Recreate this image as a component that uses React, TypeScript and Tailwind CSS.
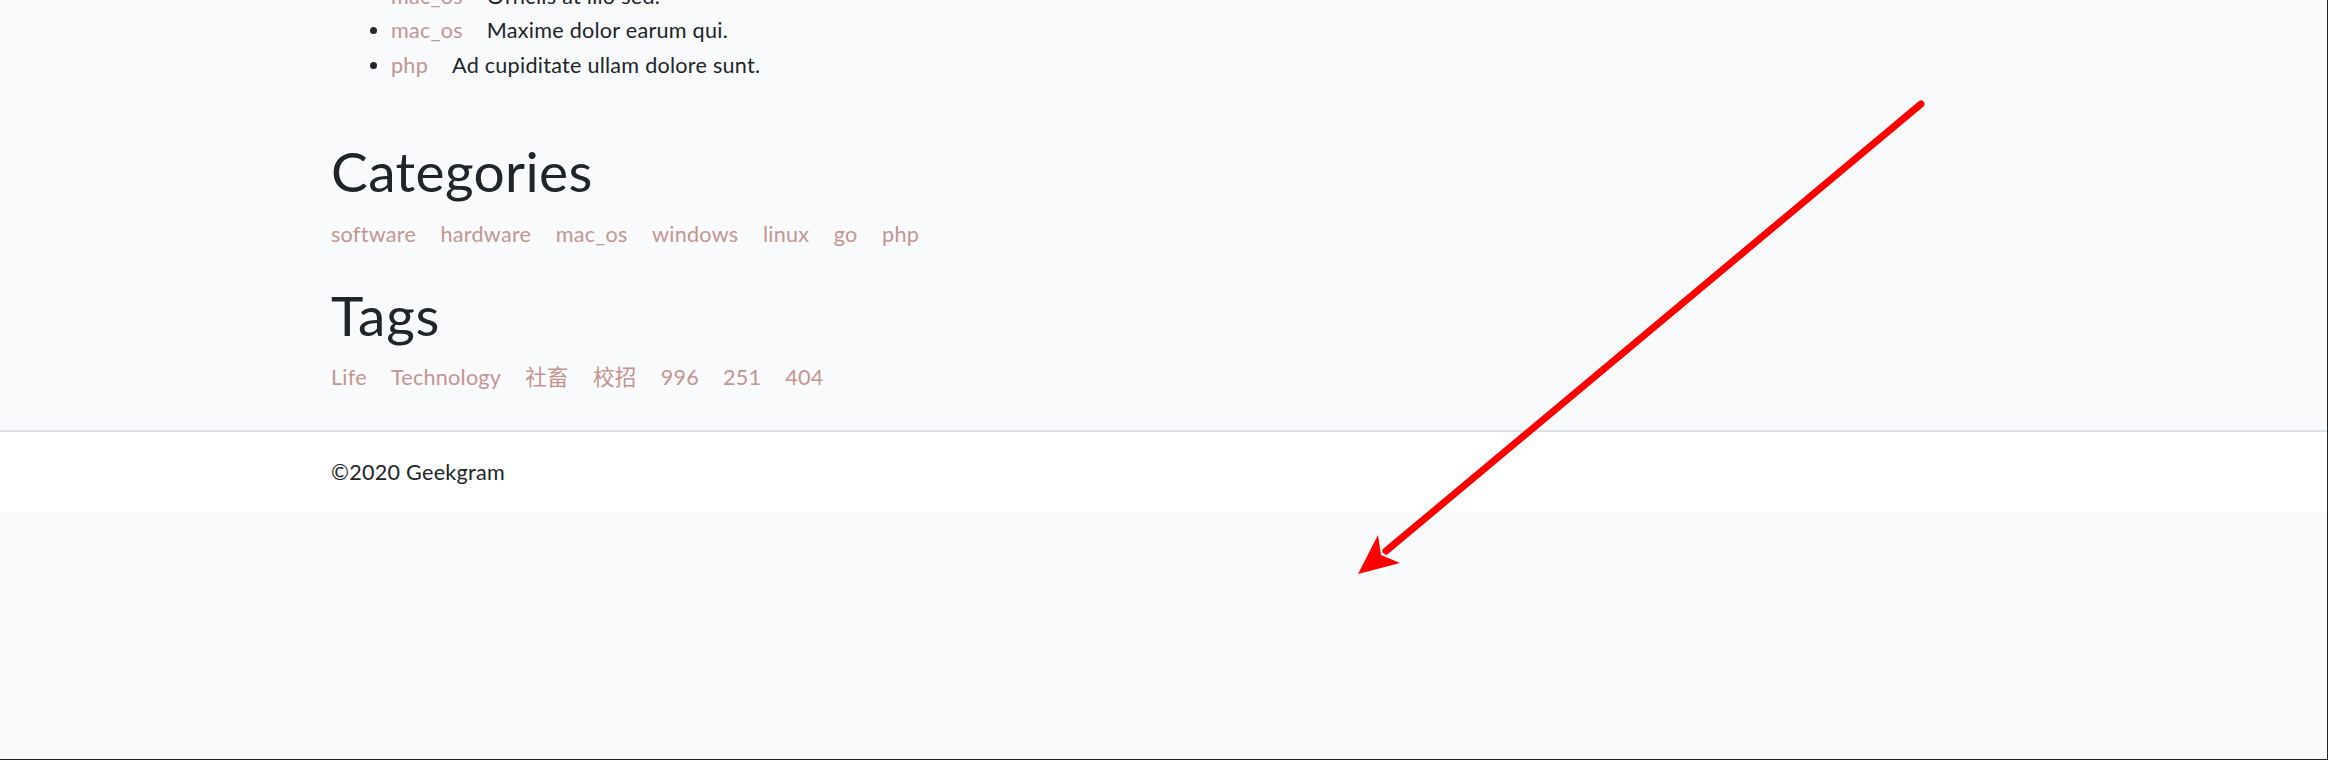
import React from "react";

const categories = ["software", "hardware", "mac_os", "windows", "linux", "go", "php"];
const tags = ["Life", "Technology", "社畜", "校招", "996", "251", "404"];
const posts = [
  { cat: "mac_os", title: "Officiis at illo sed." },
  { cat: "mac_os", title: "Maxime dolor earum qui." },
  { cat: "php", title: "Ad cupiditate ullam dolore sunt." },
];

function Arrow() {
  return (
    <svg
      className="pointer-events-none absolute left-0 top-0"
      width="2328"
      height="760"
      viewBox="0 0 2328 760"
    >
      <line x1="1921" y1="104" x2="1386" y2="551" stroke="#ff0000" strokeWidth="7" strokeLinecap="round" />
      <polygon points="1358,574 1378,535 1381,555 1400,563" fill="#ff0000" />
    </svg>
  );
}

export default function App() {
  return (
    <div className="relative h-[760px] w-full overflow-hidden border-r border-b border-[#222222] bg-[#f8fafc] font-['Lato','Noto_Sans_CJK_SC',sans-serif] text-[21.6px] leading-[1.6] tracking-[0.25px] text-[#212529]">
      <main className="pl-[331px]">
        <ul className="mt-[-21.5px] list-disc pl-[60px]">
          {posts.map((p, i) => (
            <li key={i}>
              <a className="mr-[24px] text-[#c39590]">{p.cat}</a>
              <span>{p.title}</span>
            </li>
          ))}
        </ul>
        <h1 className="mt-[56px] text-[55px] leading-[1.2] font-normal tracking-[0.4px]">Categories</h1>
        <div className="mt-[12.5px] flex flex-wrap gap-x-[24.5px]">
          {categories.map((c) => (
            <a key={c} className="text-[#c39590]">{c}</a>
          ))}
        </div>
        <h1 className="mt-[30.5px] text-[55px] leading-[1.2] font-normal tracking-[0.8px]">Tags</h1>
        <div className="mt-[12.5px] flex flex-wrap gap-x-[24px]">
          {tags.map((t) => (
            <a key={t} className="text-[#c39590]">{t}</a>
          ))}
        </div>
      </main>
      <footer className="mt-[35.5px] border-t-2 border-[#dee2e6] bg-white pt-[23px] pb-[22px] pl-[331px]">
        <span>©2020 Geekgram</span>
      </footer>
      <Arrow />
    </div>
  );
}
